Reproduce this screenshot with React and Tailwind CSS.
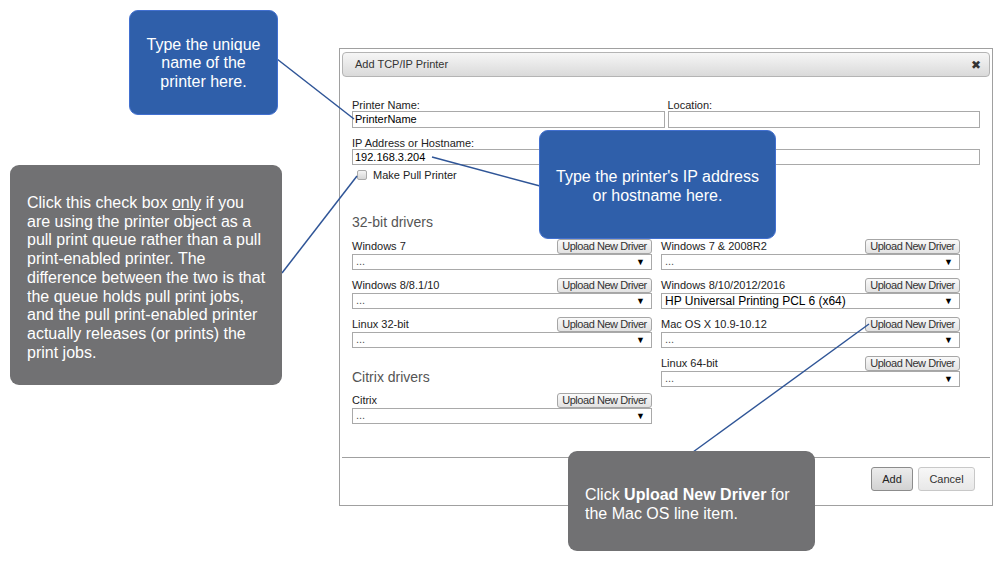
import React from 'react';

const font = { fontFamily: '"Liberation Sans", Arial, sans-serif' };

function UploadButton() {
  return (
    <button className="h-[15px] w-[95px] flex items-center justify-center rounded-[3px] border border-[#a6a6a6] bg-gradient-to-b from-[#fafafa] to-[#e2e2e2] text-[11px] tracking-[-0.45px] leading-none text-[#333] whitespace-nowrap">
      Upload New Driver
    </button>
  );
}

function DriverSelect({ value }) {
  return (
    <div className="h-[16px] w-full flex items-center justify-between border border-[#a9a9a9] bg-white pl-[3px] pr-[6px]">
      {value ? (
        <span className="text-[12px] leading-none text-black">{value}</span>
      ) : (
        <span className="text-[11px] leading-none text-[#555] -mt-[2px]">...</span>
      )}
      <span className="text-[9px] leading-none text-black">▼</span>
    </div>
  );
}

function DriverRow({ label, value }) {
  return (
    <div className="flex flex-col">
      <div className="h-[15px] flex items-center justify-between">
        <span className="text-[11px] leading-none text-[#222]">{label}</span>
        <UploadButton />
      </div>
      <DriverSelect value={value} />
    </div>
  );
}

function Callout({ className, children }) {
  return <div className={`absolute text-white text-[16px] ${className}`}>{children}</div>;
}

export default function App() {
  return (
    <div className="relative w-[993px] h-[562px] bg-white overflow-hidden" style={font}>
      {/* dialog */}
      <div className="ml-[339px] mt-[48px] w-[654px] h-[458px] border border-[#a0a0a0] bg-white flex flex-col">
        <div className="mx-[2px] mt-[3px] h-[25px] flex items-center justify-between rounded-[4px] border border-[#b4b4b4] bg-gradient-to-b from-[#f6f6f6] to-[#dadada] pl-[12px] pr-[8px]">
          <span className="text-[11px] text-[#333]">Add TCP/IP Printer</span>
          <span className="text-[12px] text-[#333] leading-none" style={{ fontFamily: '"DejaVu Sans", sans-serif' }}>✖</span>
        </div>

        <div className="pl-[12px] w-[640px]">
          <div className="pt-[22px] grid grid-cols-2 gap-x-[3px]">
            <div>
              <div className="h-[12px] text-[11px] leading-[12px] text-[#222]">Printer Name:</div>
              <div className="h-[17px] border border-[#a9a9a9] pl-[2px] text-[11px] leading-[15px] text-black">PrinterName</div>
            </div>
            <div>
              <div className="h-[12px] text-[11px] leading-[12px] text-[#222]">Location:</div>
              <div className="h-[17px] border border-[#a9a9a9]"></div>
            </div>
          </div>

          <div className="mt-[9px]">
            <div className="h-[12px] text-[11px] leading-[12px] text-[#222]">IP Address or Hostname:</div>
            <div className="h-[16px] border border-[#a9a9a9] pl-[2px] text-[11px] leading-[14px] text-black">192.168.3.204</div>
          </div>

          <div className="mt-[4px] h-[12px] flex items-center pl-[5px]">
            <span className="w-[10px] h-[10px] rounded-[2px] border border-[#aaa] bg-gradient-to-b from-[#f4f4f4] to-[#d6d6d6]"></span>
            <span className="ml-[6px] text-[11px] leading-none text-[#222]">Make Pull Printer</span>
          </div>

          <div className="mt-[33px] mb-[9px] h-[16px] text-[14px] leading-[16px] text-[#555]">32-bit drivers</div>

          <div className="flex gap-[9px]">
            <div className="w-[300px] flex flex-col">
              <div className="flex flex-col gap-[8px]">
                <DriverRow label="Windows 7" />
                <DriverRow label="Windows 8/8.1/10" />
                <DriverRow label="Linux 32-bit" />
              </div>
              <div className="pt-[21px] pb-[8px] h-[45px] text-[14px] leading-[16px] text-[#555]">Citrix drivers</div>
              <DriverRow label="Citrix" />
            </div>
            <div className="w-[299px] flex flex-col gap-[8px]">
              <DriverRow label="Windows 7 & 2008R2" />
              <DriverRow label="Windows 8/10/2012/2016" value="HP Universal Printing PCL 6 (x64)" />
              <DriverRow label="Mac OS X 10.9-10.12" />
              <DriverRow label="Linux 64-bit" />
            </div>
          </div>
        </div>

        <div className="mt-auto mx-[2px] h-[48px] border-t border-[#a0a0a0] flex justify-end items-start pt-[9px] pr-[15px] gap-[5px]">
          <button className="h-[24px] w-[42px] rounded-[3px] border border-[#8c8c8c] bg-gradient-to-b from-[#ececec] to-[#d2d2d2] text-[11px] text-[#222]">Add</button>
          <button className="h-[24px] w-[57px] rounded-[3px] border border-[#c8c8c8] bg-gradient-to-b from-[#f7f7f7] to-[#e8e8e8] text-[11px] text-[#333]">Cancel</button>
        </div>
      </div>

      {/* connector lines */}
      <svg className="absolute inset-0 pointer-events-none" width="993" height="562">
        <g stroke="#2f5597" strokeWidth="1.5" fill="none">
          <line x1="277" y1="59" x2="354" y2="119" />
          <line x1="432" y1="157" x2="540" y2="186" />
          <line x1="282" y1="273" x2="357" y2="176" />
          <line x1="693" y1="452" x2="869" y2="324" />
        </g>
      </svg>

      {/* callouts */}
      <Callout className="left-[129px] top-[10px] w-[149px] h-[105px] rounded-[9px] border border-[#4270d0] bg-[#2f5faa] flex items-center justify-center text-center leading-[18.5px]">
        <div className="mt-[2px]">Type the unique<br />name of the<br />printer here.</div>
      </Callout>

      <Callout className="left-[10px] top-[165px] w-[272px] h-[220px] rounded-[9px] bg-[#717173] pl-[17px] pt-[29px] leading-[18.7px] whitespace-nowrap">
        Click this check box <span className="underline">only</span> if you<br />
        are using the printer object as a<br />
        pull print queue rather than a pull<br />
        print-enabled printer. The<br />
        difference between the two is that<br />
        the queue holds pull print jobs,<br />
        and the pull print-enabled printer<br />
        actually releases (or prints) the<br />
        print jobs.
      </Callout>

      <Callout className="left-[539px] top-[130px] w-[237px] h-[109px] rounded-[9px] border border-[#4270d0] bg-[#2f5faa] flex items-center justify-center text-center leading-[19px]">
        <div className="mt-[2px]">Type the printer's IP address<br />or hostname here.</div>
      </Callout>

      <Callout className="left-[568px] top-[451px] w-[247px] h-[100px] rounded-[9px] bg-[#717173] pl-[17px] pt-[35px] leading-[18.5px] whitespace-nowrap">
        Click <b>Upload New Driver</b> for<br />the Mac OS line item.
      </Callout>
    </div>
  );
}
